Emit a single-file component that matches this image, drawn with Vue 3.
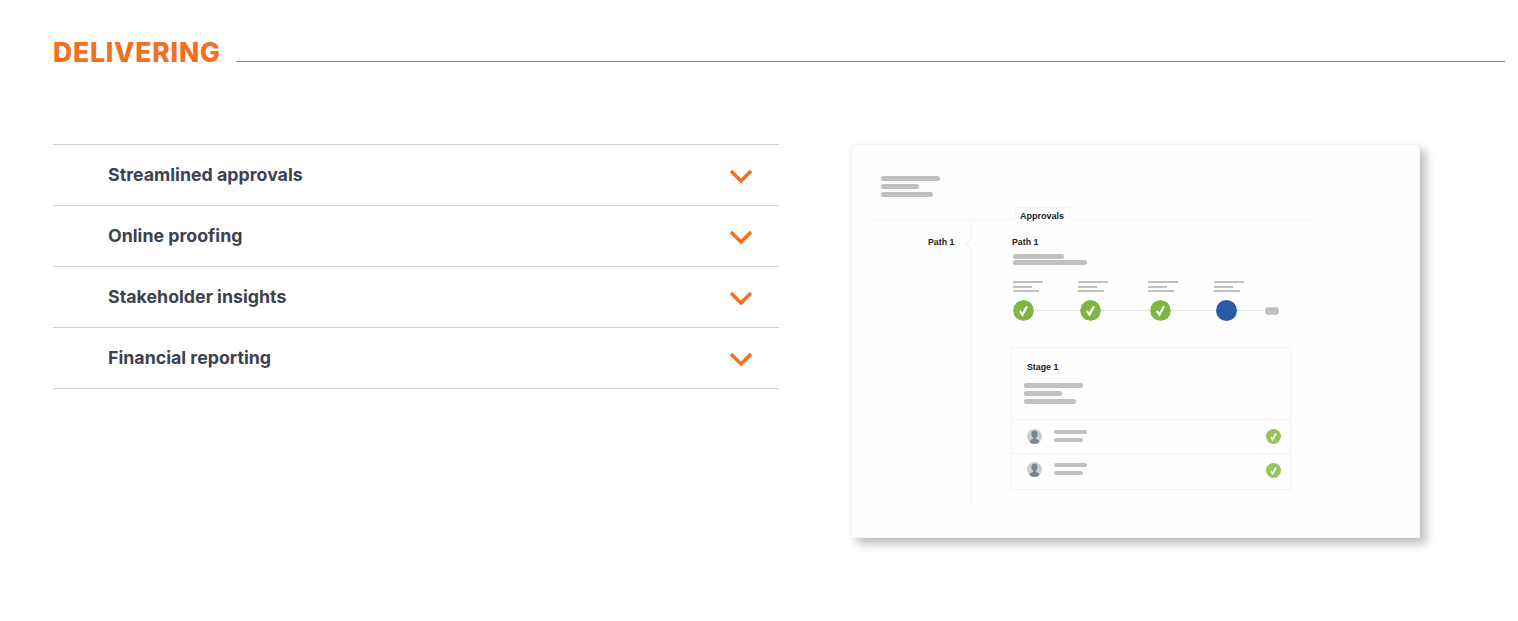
<template>
  <div class="page">
    <header class="head">
      <h1>DELIVERING</h1>
      <div class="rule"></div>
    </header>

    <main class="body">
      <ul class="list">
        <li v-for="item in items" :key="item" class="row">
          <span>{{ item }}</span>
          <svg width="24" height="16" viewBox="0 0 24 16">
            <path d="M2 3 L12 13 L22 3" fill="none" stroke="#f36f21" stroke-width="3.4" />
          </svg>
        </li>
      </ul>

      <section class="mock">
        <div class="bars top-bars">
          <i style="width:59px"></i>
          <i style="width:38px"></i>
          <i style="width:52px"></i>
        </div>

        <div class="tab-line">
          <div class="tab">Approvals</div>
        </div>

        <div class="split">
          <aside class="side">
            <b>Path 1</b>
            <span class="notch"></span>
          </aside>

          <div class="content">
            <b class="path-title">Path 1</b>
            <div class="bars path-bars">
              <i style="width:51px"></i>
              <i style="width:74px"></i>
            </div>

            <div class="steps">
              <div v-for="(step, i) in steps" :key="i" class="step" :style="{ width: step.w + 'px' }">
                <div class="mini">
                  <i style="width:30px"></i>
                  <i style="width:19px"></i>
                  <i style="width:26px"></i>
                </div>
                <svg v-if="step.done" class="dot" width="21" height="21" viewBox="0 0 21 21">
                  <circle cx="10.5" cy="10.5" r="10.5" fill="#7db643" />
                  <path d="M6.8 11 L9.4 14.6 L14 6.4" fill="none" stroke="#fff" stroke-width="2.2" />
                </svg>
                <span v-else class="dot blue"></span>
              </div>
              <span class="more"><i></i><i></i></span>
            </div>

            <div class="stage">
              <div class="stage-head">
                <b>Stage 1</b>
                <div class="bars">
                  <i style="width:59px"></i>
                  <i style="width:38px"></i>
                  <i style="width:52px"></i>
                </div>
              </div>
              <div v-for="n in 2" :key="n" class="person">
                <svg width="15" height="15" viewBox="0 0 15 15">
                  <defs>
                    <clipPath :id="'avatar' + n"><circle cx="7.5" cy="7.5" r="7.5" /></clipPath>
                  </defs>
                  <circle cx="7.5" cy="7.5" r="7.5" fill="#c9d0d3" />
                  <g :clip-path="'url(#avatar' + n + ')'" fill="#7b858c">
                    <ellipse cx="7.5" cy="5.2" rx="3.1" ry="3.7" />
                    <path d="M6 8 H9 V10 C11 10.4 12.6 11.4 13 15 H2 C2.4 11.4 4 10.4 6 10 Z" />
                  </g>
                </svg>
                <div class="bars person-bars">
                  <i style="width:33px"></i>
                  <i style="width:29px"></i>
                </div>
                <svg class="ok" width="15" height="15" viewBox="0 0 15 15">
                  <circle cx="7.5" cy="7.5" r="7.5" fill="#97c45f" />
                  <path d="M4.8 8 L6.7 10.6 L10 4.7" fill="none" stroke="#fff" stroke-width="1.7" />
                </svg>
              </div>
            </div>
          </div>
        </div>
      </section>
    </main>
  </div>
</template>

<script setup>
const items = ['Streamlined approvals', 'Online proofing', 'Stakeholder insights', 'Financial reporting']

const steps = [
  { w: 67, done: true },
  { w: 70, done: true },
  { w: 66, done: true },
  { w: 50, done: false }
]
</script>

<style>
html, body {
  background: #fff;
}
</style>

<style scoped>
.page {
  width: 1518px;
  height: 621px;
  overflow: hidden;
  box-sizing: border-box;
  padding: 36px 13px 0 53px;
  font-family: "Inter", "Liberation Sans", sans-serif;
}

.head {
  display: flex;
  align-items: flex-end;
  gap: 15px;
  height: 32px;
}

.head h1 {
  margin: 0;
  font-size: 26.5px;
  line-height: 32px;
  font-weight: 800;
  letter-spacing: 0.8px;
  color: #f36f21;
}

.rule {
  flex: 1;
  height: 1px;
  margin-bottom: 6px;
  background: #dd7230;
}

.body {
  display: flex;
  margin-top: 76px;
}

.list {
  list-style: none;
  margin: 0;
  padding: 0;
  width: 726px;
  border-top: 1px solid #d2d2d2;
}

.row {
  display: flex;
  align-items: center;
  justify-content: space-between;
  height: 60px;
  padding: 0 26px 0 55px;
  border-bottom: 1px solid #d2d2d2;
  font-size: 17.8px;
  font-weight: 700;
  color: #3d4250;
}

.row span {
  margin-bottom: 2px;
}

.row svg {
  margin-top: 2px;
}

.mock {
  width: 569px;
  height: 394px;
  margin-left: 72px;
  box-sizing: border-box;
  padding-top: 31px;
  background: #fefefe;
  border: 1px solid #f4f4f4;
  box-shadow: 6px 6px 9px rgba(0, 0, 0, 0.26);
  font-family: "Liberation Sans", sans-serif;
  color: #222;
}

.mock b {
  display: block;
  font-size: 8.8px;
  line-height: 10px;
}

.bars {
  display: flex;
  flex-direction: column;
  gap: 3px;
}

.bars i {
  display: block;
  height: 5px;
  border-radius: 3px;
  background: #c0c0c0;
}

.top-bars {
  margin-left: 29px;
}

.tab-line {
  height: 13px;
  margin: 9px 108px 0 20px;
  border-bottom: 1px solid #f5f5f5;
  display: flex;
  align-items: flex-end;
  padding-left: 143px;
}

.tab {
  height: 11px;
  margin-bottom: -1px;
  padding: 0 4px;
  border: 1px solid #f3f3f3;
  border-bottom-color: #fefefe;
  background: #fefefe;
  font-size: 9px;
  line-height: 17px;
  font-weight: 700;
}

.split {
  display: flex;
  height: 285px;
}

.side {
  position: relative;
  width: 99px;
  margin-left: 20px;
  border-right: 1px solid #f3f3f3;
  padding: 17px 0 0 56px;
  box-sizing: border-box;
}

.notch {
  position: absolute;
  top: 20px;
  right: -4px;
  width: 6px;
  height: 6px;
  background: #fefefe;
  border-left: 1px solid #f0f0f0;
  border-bottom: 1px solid #f0f0f0;
  transform: rotate(45deg);
}

.content {
  padding: 17px 0 0 41px;
  width: 320px;
}

.path-bars {
  margin: 7px 0 0 1px;
  gap: 1px;
}

.steps {
  position: relative;
  display: flex;
  align-items: flex-end;
  margin: 16px 0 0 1px;
  width: 265px;
}

.steps::before {
  content: "";
  position: absolute;
  left: 10px;
  right: 10px;
  bottom: 10px;
  border-top: 1px dotted #ccc;
}

.step {
  position: relative;
  flex: none;
}

.mini {
  display: flex;
  flex-direction: column;
  gap: 2.5px;
  margin-bottom: 8px;
}

.step:not(:first-of-type) .mini {
  margin-left: -2px;
}

.mini i {
  display: block;
  height: 2px;
  background: #c0c0c0;
}

.dot {
  display: block;
  width: 21px;
  height: 21px;
  border-radius: 50%;
}

.blue {
  background: #2a5ca6;
}

.more {
  position: relative;
  flex: none;
  display: flex;
  margin: 0 0 6px -1px;
}

.more i {
  flex: none;
  width: 8px;
  height: 8px;
  border-radius: 50%;
  background: #c0c0c0;
}

.more i + i {
  margin-left: -2px;
}

.stage {
  width: 278px;
  margin: 26px 0 0 -1px;
  border: 1px solid #f3f3f3;
}

.stage-head {
  height: 71px;
  box-sizing: border-box;
  padding: 14px 0 0 12px;
}

.stage-head b {
  margin: 0 0 11px 3px;
}

.person {
  display: flex;
  align-items: center;
  height: 34px;
  padding: 0 9px 0 15px;
  border-top: 1px solid #f3f3f3;
  box-sizing: border-box;
}

.person:last-child {
  height: 36px;
  padding-bottom: 4px;
}

.person:last-child .ok {
  margin-top: 2px;
}

.person-bars {
  margin: -2px 0 0 12px;
  gap: 4px;
}

.person-bars i {
  height: 4px;
}

.ok {
  margin-left: auto;
}
</style>
